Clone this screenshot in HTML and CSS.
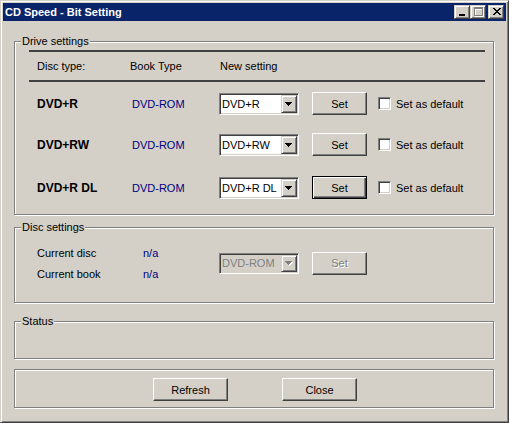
FILE: index.html
```html
<!DOCTYPE html>
<html>
<head>
<meta charset="utf-8">
<title>CD Speed - Bit Setting</title>
<link rel="stylesheet" href="styles.css">
</head>
<body>
<div class="window">
  <div class="titlebar">
    <span class="title">CD Speed - Bit Setting</span>
    <div class="caption-btns">
      <span class="cbtn"><svg width="14" height="12" viewBox="0 0 14 12" shape-rendering="crispEdges"><rect x="4" y="8" width="6" height="2" fill="#000"/></svg></span>
      <span class="cbtn"><svg width="14" height="12" viewBox="0 0 14 12" shape-rendering="crispEdges"><g fill="#fff"><rect x="4" y="2" width="9" height="2"/><rect x="4" y="2" width="1" height="9"/><rect x="12" y="2" width="1" height="9"/><rect x="4" y="10" width="9" height="1"/></g><g fill="#808080"><rect x="3" y="1" width="9" height="2"/><rect x="3" y="1" width="1" height="9"/><rect x="11" y="1" width="1" height="9"/><rect x="3" y="9" width="9" height="1"/></g></svg></span>
      <span class="cbtn close"><svg width="14" height="12" viewBox="0 0 14 12" shape-rendering="crispEdges"><g fill="#000"><rect x="4" y="2" width="2" height="1"/><rect x="10" y="2" width="2" height="1"/><rect x="5" y="3" width="2" height="1"/><rect x="9" y="3" width="2" height="1"/><rect x="6" y="4" width="4" height="1"/><rect x="7" y="5" width="2" height="1"/><rect x="6" y="6" width="4" height="1"/><rect x="5" y="7" width="2" height="1"/><rect x="9" y="7" width="2" height="1"/><rect x="4" y="8" width="2" height="1"/><rect x="10" y="8" width="2" height="1"/></g></svg></span>
    </div>
  </div>
  <div class="client">
    <div class="group drive">
      <span class="legend">Drive settings</span>
      <div class="hline"></div>
      <div class="hdr"><span class="hc1">Disc type:</span><span class="hc2">Book Type</span><span>New setting</span></div>
      <div class="hline"></div>
      <div class="rows">
        <div class="row">
          <span class="disc-type">DVD+R</span>
          <span class="book">DVD-ROM</span>
          <div class="combo"><span class="combo-text">DVD+R</span><span class="combo-btn"><svg width="8" height="4" viewBox="0 0 8 4" shape-rendering="crispEdges"><g fill="#000"><rect x="0" y="0" width="7" height="1"/><rect x="1" y="1" width="5" height="1"/><rect x="2" y="2" width="3" height="1"/><rect x="3" y="3" width="1" height="1"/></g></svg></span></div>
          <button class="btn">Set</button>
          <label class="chk"><span class="box"></span>Set as default</label>
        </div>
        <div class="row">
          <span class="disc-type">DVD+RW</span>
          <span class="book">DVD-ROM</span>
          <div class="combo"><span class="combo-text">DVD+RW</span><span class="combo-btn"><svg width="8" height="4" viewBox="0 0 8 4" shape-rendering="crispEdges"><g fill="#000"><rect x="0" y="0" width="7" height="1"/><rect x="1" y="1" width="5" height="1"/><rect x="2" y="2" width="3" height="1"/><rect x="3" y="3" width="1" height="1"/></g></svg></span></div>
          <button class="btn">Set</button>
          <label class="chk"><span class="box"></span>Set as default</label>
        </div>
        <div class="row r3">
          <span class="disc-type">DVD+R DL</span>
          <span class="book">DVD-ROM</span>
          <div class="combo"><span class="combo-text">DVD+R DL</span><span class="combo-btn"><svg width="8" height="4" viewBox="0 0 8 4" shape-rendering="crispEdges"><g fill="#000"><rect x="0" y="0" width="7" height="1"/><rect x="1" y="1" width="5" height="1"/><rect x="2" y="2" width="3" height="1"/><rect x="3" y="3" width="1" height="1"/></g></svg></span></div>
          <button class="btn default">Set</button>
          <label class="chk"><span class="box"></span>Set as default</label>
        </div>
      </div>
    </div>

    <div class="group disc">
      <span class="legend">Disc settings</span>
      <div class="disc-row">
        <div class="info">
          <span>Current disc</span><span class="val">n/a</span>
          <span>Current book</span><span class="val">n/a</span>
        </div>
        <div class="combo disabled"><span class="combo-text">DVD-ROM</span><span class="combo-btn"><svg width="8" height="5" viewBox="0 0 8 5" shape-rendering="crispEdges"><g fill="#fff"><rect x="1" y="1" width="7" height="1"/><rect x="2" y="2" width="5" height="1"/><rect x="3" y="3" width="3" height="1"/><rect x="4" y="4" width="1" height="1"/></g><g fill="#808080"><rect x="0" y="0" width="7" height="1"/><rect x="1" y="1" width="5" height="1"/><rect x="2" y="2" width="3" height="1"/><rect x="3" y="3" width="1" height="1"/></g></svg></span></div>
        <button class="btn disabled set-disabled">Set</button>
      </div>
    </div>

    <div class="group status">
      <span class="legend">Status</span>
    </div>

    <div class="group actions">
      <button class="btn wide">Refresh</button>
      <button class="btn wide">Close</button>
    </div>
  </div>
</div>
</body>
</html>
```

FILE: styles.css
```css
html, body {
  margin: 0;
  padding: 0;
  background: #d4d0c8;
}

.window {
  width: 509px;
  height: 423px;
  box-sizing: border-box;
  border: 1px solid;
  border-color: #d4d0c8 #404040 #404040 #d4d0c8;
  box-shadow: inset 1px 1px 0 #fff, inset -1px -1px 0 #808080;
  padding: 2px;
  background: #d4d0c8;
  font-family: "Liberation Sans", Arial, sans-serif;
  font-size: 11px;
  color: #000;
}

.titlebar {
  height: 18px;
  background: #0a246a;
  display: flex;
  align-items: center;
  color: #fff;
}

.title {
  font-weight: bold;
  padding-left: 2px;
}

.caption-btns {
  margin-left: auto;
  margin-right: 2px;
  align-self: flex-start;
  margin-top: 2px;
  display: flex;
}

.cbtn {
  width: 16px;
  height: 14px;
  box-sizing: border-box;
  border: 1px solid;
  border-color: #d4d0c8 #404040 #404040 #d4d0c8;
  box-shadow: inset 1px 1px 0 #fff, inset -1px -1px 0 #808080;
  background: #d4d0c8;
  display: block;
}

.cbtn svg {
  display: block;
}

.cbtn.close {
  margin-left: 2px;
}

.client {
  padding: 20px 12px 0 11px;
}

.group {
  position: relative;
  box-sizing: border-box;
  border: 1px solid #808080;
  box-shadow: 1px 1px 0 #fff, inset 1px 1px 0 #fff;
}

.legend {
  position: absolute;
  left: 6px;
  top: -7px;
  padding: 0 1px;
  line-height: 13px;
  background: #d4d0c8;
}

.drive {
  height: 174px;
  padding: 8px 8px 0 14px;
}

.hline {
  height: 2px;
  background: #404040;
}

.hdr {
  height: 28px;
  display: flex;
  align-items: center;
  padding-left: 8px;
}

.hc1 {
  width: 93px;
}

.hc2 {
  width: 90px;
}

.rows {
  margin-top: 10px;
  padding-left: 8px;
}

.row {
  display: grid;
  grid-template-columns: 95px 87px 93px 66px auto;
  align-items: center;
  height: 23px;
}

.row + .row {
  margin-top: 18px;
}

.row.r3 {
  margin-top: 20px;
}

.disc-type {
  font-weight: bold;
  font-size: 12px;
}

.book,
.val {
  color: #000080;
}

.combo {
  width: 80px;
  height: 22px;
  box-sizing: border-box;
  border: 1px solid;
  border-color: #808080 #fff #fff #808080;
  box-shadow: inset 1px 1px 0 #404040, inset -1px -1px 0 #d4d0c8;
  background: #fff;
  display: flex;
  padding: 1px;
}

.combo-text {
  flex: 1;
  padding-left: 1px;
  line-height: 18px;
  white-space: nowrap;
  overflow: hidden;
}

.combo-btn {
  width: 16px;
  box-sizing: border-box;
  border: 1px solid;
  border-color: #d4d0c8 #404040 #404040 #d4d0c8;
  box-shadow: inset 1px 1px 0 #fff, inset -1px -1px 0 #808080;
  background: #d4d0c8;
  display: flex;
  align-items: center;
  justify-content: center;
}

.combo-btn svg {
  display: block;
}

.combo.disabled {
  height: 21px;
  background: #d4d0c8;
  color: #808080;
}

.combo.disabled .combo-text {
  line-height: 17px;
}

.btn {
  width: 55px;
  height: 23px;
  box-sizing: border-box;
  border: 1px solid;
  border-color: #fff #404040 #404040 #fff;
  box-shadow: inset -1px -1px 0 #808080;
  background: #d4d0c8;
  font: inherit;
  color: #000;
  padding: 0;
  margin: 0;
  border-radius: 0;
  outline: none;
}

.btn.default {
  border-color: #000;
  box-shadow: inset 1px 1px 0 #fff, inset -1px -1px 0 #404040, inset -2px -2px 0 #808080;
}

.btn.disabled {
  color: #808080;
  text-shadow: 1px 1px 0 #fff;
}

.btn.wide {
  width: 75px;
}

.chk {
  display: flex;
  align-items: center;
  gap: 5px;
}

.box {
  width: 13px;
  height: 13px;
  box-sizing: border-box;
  border: 1px solid;
  border-color: #808080 #fff #fff #808080;
  box-shadow: inset 1px 1px 0 #404040, inset -1px -1px 0 #d4d0c8;
  background: #fff;
}

.disc {
  height: 76px;
  margin-top: 12px;
  padding: 14px 0 0 22px;
}

.disc-row {
  display: flex;
  align-items: center;
}

.info {
  display: grid;
  grid-template-columns: 106px 76px;
  grid-auto-rows: 21px;
  align-items: center;
}

.set-disabled {
  margin-left: 13px;
}

.status {
  height: 38px;
  margin-top: 18px;
}

.actions {
  height: 39px;
  margin-top: 10px;
  display: flex;
  align-items: flex-start;
  gap: 54px;
  padding: 8px 0 0 138px;
}
```
